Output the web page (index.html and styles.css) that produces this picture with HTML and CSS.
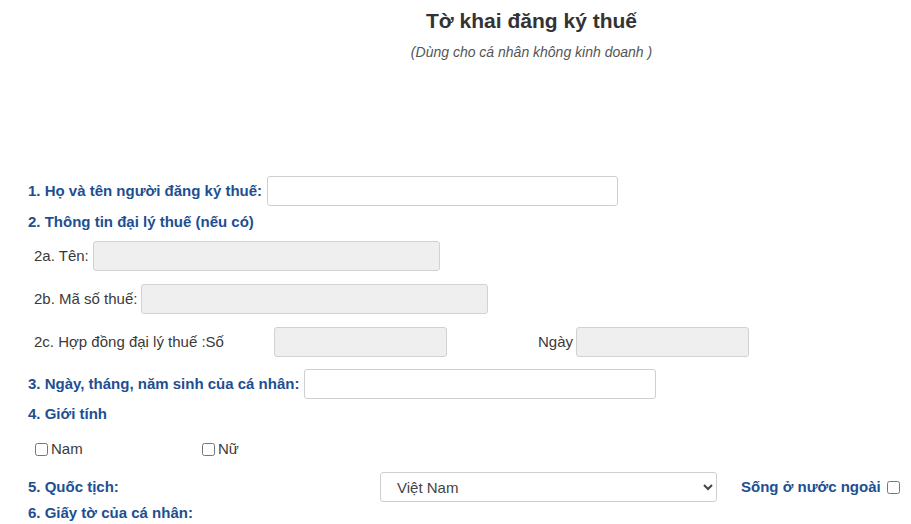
FILE: index.html
```html
<!DOCTYPE html>
<html lang="vi">
<head>
  <meta charset="UTF-8" />
  <meta name="viewport" content="width=device-width, initial-scale=1.0"/>
  <title>Tờ khai đăng ký thuế</title>
  <link rel="stylesheet" href="styles.css">
</head>
<body>
  <div class="header">
    <div class="title">Tờ khai đăng ký thuế</div>
    <div class="subtitle">(Dùng cho cá nhân không kinh doanh )</div>
  </div>

  <form class="tax-form">
    <div class="row row-1">
      <label class="lbl">1. Họ và tên người đăng ký thuế:</label>
      <input type="text" class="txt w-name">
    </div>

    <div class="row row-2 lbl">2. Thông tin đại lý thuế (nếu có)</div>

    <div class="row sub row-2a">
      <span class="sub-lbl">2a. Tên:</span>
      <input type="text" class="txt w-wide" disabled>
    </div>

    <div class="row sub row-2b">
      <span class="sub-lbl">2b. Mã số thuế:</span>
      <input type="text" class="txt w-wide" disabled>
    </div>

    <div class="row sub row-2c">
      <span class="sub-lbl contract">2c. Hợp đồng đại lý thuế :Số</span>
      <input type="text" class="txt w-short" disabled>
      <span class="sub-lbl date">Ngày</span>
      <input type="text" class="txt w-short" disabled>
    </div>

    <div class="row row-3">
      <label class="lbl">3. Ngày, tháng, năm sinh của cá nhân:</label>
      <input type="text" class="txt w-birth">
    </div>

    <div class="row row-4 lbl">4. Giới tính</div>

    <div class="row gender">
      <label class="opt"><input type="checkbox">Nam</label>
      <label class="opt"><input type="checkbox">Nữ</label>
    </div>

    <div class="row row-5">
      <label class="lbl nat">5. Quốc tịch:</label>
      <select class="sel">
        <option>Việt Nam</option>
      </select>
      <label class="lbl abroad">Sống ở nước ngoài <input type="checkbox"></label>
    </div>

    <div class="row row-6 lbl">6. Giấy tờ của cá nhân:</div>
  </form>
</body>
</html>
```

FILE: styles.css
```css
body {
  margin: 0;
  padding: 0;
  font-family: "Liberation Sans", Arial, sans-serif;
  font-size: 15px;
  color: #333;
  background: #fff;
  overflow: hidden;
}

.header {
  margin-left: 152px;
  padding-top: 9px;
  text-align: center;
}

.title {
  font-size: 21px;
  font-weight: bold;
  color: #333;
  line-height: 24px;
}

.subtitle {
  margin-top: 11px;
  font-size: 14px;
  font-style: italic;
  color: #555;
  line-height: 16px;
}

.tax-form {
  padding-left: 28px;
  margin-top: 116px;
}

.row {
  display: flex;
  align-items: center;
  line-height: 20px;
}

.lbl {
  font-weight: bold;
  color: #1d4f91;
}

.sub {
  padding-left: 6px;
}

.sub-lbl {
  color: #3a3a3a;
  margin-right: 4px;
}

.txt {
  box-sizing: border-box;
  height: 30px;
  border: 1px solid #cfcfcf;
  border-radius: 3px;
  padding: 4px 8px;
  font: inherit;
  background: #fff;
}

.txt:disabled {
  background: #efefef;
  border-color: #d2d2d2;
}

.w-name {
  width: 351px;
}

.w-wide {
  width: 347px;
}

.w-short {
  width: 173px;
}

.w-birth {
  width: 352px;
}

.row-1 .lbl,
.row-3 .lbl {
  margin-right: 5px;
}

.row-2 {
  margin-top: 6px;
}

.row-2a {
  margin-top: 9px;
}

.row-2b,
.row-2c {
  margin-top: 13px;
}

.contract {
  width: 236px;
}

.date {
  width: 126px;
  text-align: right;
  margin-right: 3px;
}

.row-3 {
  margin-top: 12px;
}

.row-4 {
  margin-top: 5px;
}

.gender {
  margin-top: 15px;
  padding-left: 6px;
}

.opt {
  width: 167px;
  display: flex;
  align-items: center;
  color: #3a3a3a;
}

.opt input,
.abroad input {
  margin: 0 3px 0 1px;
  width: 13px;
  height: 13px;
}

.row-5 {
  margin-top: 13px;
}

.nat {
  width: 352px;
}

.sel {
  box-sizing: border-box;
  width: 337px;
  height: 30px;
  border: 1px solid #cfcfcf;
  border-radius: 3px;
  padding: 0 12px;
  font: inherit;
  color: #444;
  background: #fff;
}

.abroad {
  margin-left: 24px;
  display: flex;
  align-items: center;
}

.abroad input {
  margin-left: 6px;
}

.row-6 {
  margin-top: 1px;
}
```
